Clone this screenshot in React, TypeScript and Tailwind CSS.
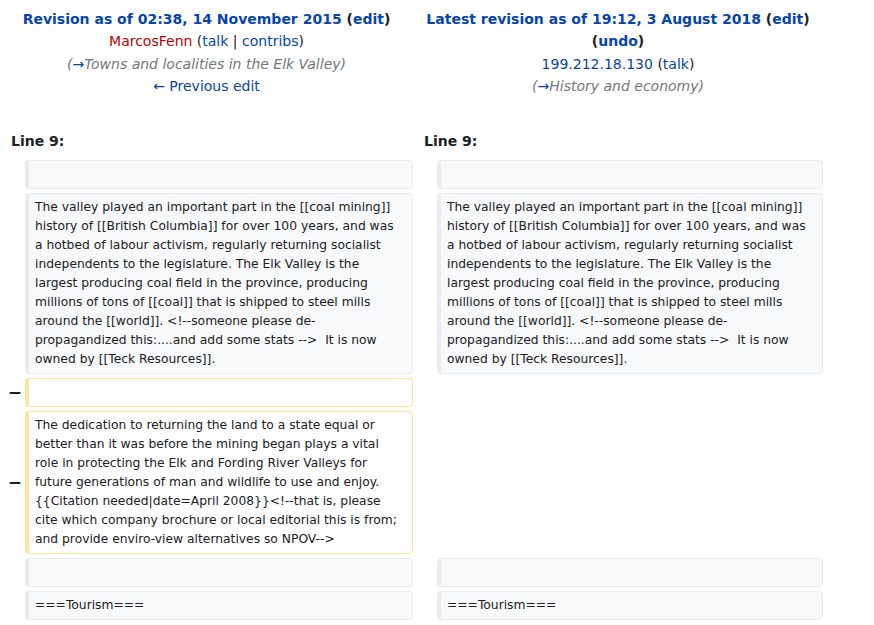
import React from "react";

type Kind = "context" | "deleted" | "empty";

interface DiffRow {
  marker?: string;
  left: { kind: Kind; text?: string };
  right: { kind: Kind; text?: string };
}

const valley =
  "The valley played an important part in the [[coal mining]] history of [[British Columbia]] for over 100 years, and was a hotbed of labour activism, regularly returning socialist independents to the legislature. The Elk Valley is the largest producing coal field in the province, producing millions of tons of [[coal]] that is shipped to steel mills around the [[world]]. <!--someone please de-propagandized this:....and add some stats -->  It is now owned by [[Teck Resources]].";

const dedication =
  "The dedication to returning the land to a state equal or better than it was before the mining began plays a vital role in protecting the Elk and Fording River Valleys for future generations of man and wildlife to use and enjoy. {{Citation needed|date=April 2008}}<!--that is, please cite which company brochure or local editorial this is from; and provide enviro-view alternatives so NPOV-->";

const rows: DiffRow[] = [
  { left: { kind: "context", text: "" }, right: { kind: "context", text: "" } },
  { left: { kind: "context", text: valley }, right: { kind: "context", text: valley } },
  { marker: "−", left: { kind: "deleted", text: "" }, right: { kind: "empty" } },
  { marker: "−", left: { kind: "deleted", text: dedication }, right: { kind: "empty" } },
  { left: { kind: "context", text: "" }, right: { kind: "context", text: "" } },
  { left: { kind: "context", text: "===Tourism===" }, right: { kind: "context", text: "===Tourism===" } },
];

function Cell({ kind, text }: { kind: Kind; text?: string }) {
  if (kind === "empty") return <div />;
  const tone =
    kind === "deleted"
      ? "border-[#ffe49c] bg-white"
      : "border-[#eaecf0] bg-[#f8f9fa]";
  return (
    <div
      className={`min-h-[29px] rounded-[4px] border border-l-4 pl-[6px] pr-[11px] py-[4px] text-[12.3px] leading-[19px] text-[#202122] whitespace-pre-wrap break-words ${tone}`}
    >
      {text}
    </div>
  );
}

const link = "text-[#0645ad]";

export default function App() {
  return (
    <div className="w-[874px] h-[625px] overflow-hidden bg-white text-[#202122] font-['DejaVu_Sans',sans-serif] text-[14px]">
      <div className="grid grid-cols-[25px_388px_24px_386px] gap-y-[4px]">
        {/* header */}
        <div className="col-span-2 pt-[8px] text-center leading-[22.4px]">
          <div className="font-bold">
            <span className={link}>Revision as of 02:38, 14 November 2015</span> (
            <span className={link}>edit</span>)
          </div>
          <div>
            <span className="text-[#ba0000]">MarcosFenn</span> (<span className={link}>talk</span> |{" "}
            <span className={link}>contribs</span>)
          </div>
          <div className="italic text-[#72777d]">
            (<span className={link}>→</span>Towns and localities in the Elk Valley)
          </div>
          <div className={link}>← Previous edit</div>
        </div>
        <div className="col-span-2 pt-[8px] text-center leading-[22.4px]">
          <div className="font-bold">
            <span className={link}>Latest revision as of 19:12, 3 August 2018</span> (
            <span className={link}>edit</span>)
          </div>
          <div className="font-bold">
            (<span className={link}>undo</span>)
          </div>
          <div>
            <span className={link}>199.212.18.130</span> (<span className={link}>talk</span>)
          </div>
          <div className="italic text-[#72777d]">
            (<span className={link}>→</span>History and economy)
          </div>
        </div>

        {/* line numbers */}
        <div className="col-span-2 pt-[28px] pb-[4px] pl-[11px] font-bold leading-[22px]">Line 9:</div>
        <div className="col-span-2 pt-[28px] pb-[4px] pl-[11px] font-bold leading-[22px]">Line 9:</div>

        {rows.map((row, i) => (
          <React.Fragment key={i}>
            <div className="flex items-center justify-end pr-[3px] text-[17px] font-bold leading-none">
              {row.marker}
            </div>
            <Cell {...row.left} />
            <div />
            <Cell {...row.right} />
          </React.Fragment>
        ))}
      </div>
    </div>
  );
}
